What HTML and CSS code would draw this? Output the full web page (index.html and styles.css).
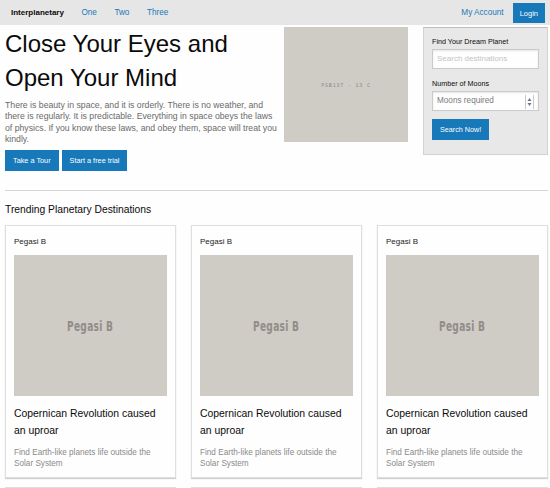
FILE: index.html
```html
<!DOCTYPE html>
<html lang="en">
<head>
<meta charset="utf-8">
<title>Interplanetary</title>
<link rel="stylesheet" href="styles.css">
</head>
<body>
<header class="topbar">
  <nav class="topbar-left">
    <span class="brand">Interplanetary</span>
    <a class="nav-link" href="#">One</a>
    <a class="nav-link" href="#">Two</a>
    <a class="nav-link" href="#">Three</a>
  </nav>
  <nav class="topbar-right">
    <a class="nav-link" href="#">My Account</a>
    <a class="btn btn-login" href="#">Login</a>
  </nav>
</header>
<main class="page">
  <section class="hero">
    <div class="hero-text">
      <h1 class="hero-title">Close Your Eyes and Open Your Mind</h1>
      <p class="hero-lead">There is beauty in space, and it is orderly. There is no weather, and there is regularly. It is predictable. Everything in space obeys the laws of physics. If you know these laws, and obey them, space will treat you kindly.</p>
      <div class="btn-row">
        <a class="btn" href="#">Take a Tour</a>
        <a class="btn" href="#">Start a free trial</a>
      </div>
    </div>
    <div class="hero-img"><span class="hero-img-text">PSB137 · 13 C</span></div>
    <form class="callout">
      <label class="field-label">Find Your Dream Planet</label>
      <input class="field" type="text" placeholder="Search destinations">
      <label class="field-label">Number of Moons</label>
      <div class="field field-number">
        <span class="field-value">Moons required</span>
        <svg class="spinner" width="9" height="14" viewBox="0 0 9 14">
          <line x1="0.5" y1="0" x2="0.5" y2="14" stroke="#c8c8c8" stroke-width="1"/>
          <line x1="8.5" y1="0" x2="8.5" y2="14" stroke="#c8c8c8" stroke-width="1"/>
          <path d="M2.5 6 L4.5 3 L6.5 6 Z" fill="#6a7690"/>
          <path d="M2.5 8 L4.5 11 L6.5 8 Z" fill="#6a7690"/>
        </svg>
      </div>
      <button class="btn btn-search" type="button">Search Now!</button>
    </form>
  </section>
  <hr class="divider">
  <h5 class="section-title">Trending Planetary Destinations</h5>
  <div class="cards">
    <article class="card">
      <div class="card-label">Pegasi B</div>
      <div class="card-img"><span>Pegasi B</span></div>
      <h4 class="card-title">Copernican Revolution caused an uproar</h4>
      <p class="card-text">Find Earth-like planets life outside the Solar System</p>
    </article>
    <article class="card">
      <div class="card-label">Pegasi B</div>
      <div class="card-img"><span>Pegasi B</span></div>
      <h4 class="card-title">Copernican Revolution caused an uproar</h4>
      <p class="card-text">Find Earth-like planets life outside the Solar System</p>
    </article>
    <article class="card">
      <div class="card-label">Pegasi B</div>
      <div class="card-img"><span>Pegasi B</span></div>
      <h4 class="card-title">Copernican Revolution caused an uproar</h4>
      <p class="card-text">Find Earth-like planets life outside the Solar System</p>
    </article>
    <article class="card">
      <div class="card-label">Pegasi B</div>
      <div class="card-img"><span>Pegasi B</span></div>
      <h4 class="card-title">Copernican Revolution caused an uproar</h4>
      <p class="card-text">Find Earth-like planets life outside the Solar System</p>
    </article>
    <article class="card">
      <div class="card-label">Pegasi B</div>
      <div class="card-img"><span>Pegasi B</span></div>
      <h4 class="card-title">Copernican Revolution caused an uproar</h4>
      <p class="card-text">Find Earth-like planets life outside the Solar System</p>
    </article>
    <article class="card">
      <div class="card-label">Pegasi B</div>
      <div class="card-img"><span>Pegasi B</span></div>
      <h4 class="card-title">Copernican Revolution caused an uproar</h4>
      <p class="card-text">Find Earth-like planets life outside the Solar System</p>
    </article>
  </div>
</main>
</body>
</html>
```
FILE: styles.css
```css
* { box-sizing: border-box; }
html, body { overflow: hidden; }
body {
  margin: 0;
  font-family: "Liberation Sans", Arial, sans-serif;
  color: #0a0a0a;
  background: #fefefe;
}
a { text-decoration: none; }

.topbar {
  height: 25px;
  background: #e6e6e6;
  display: flex;
  align-items: center;
  justify-content: space-between;
  padding: 0 5px 0 11px;
  font-size: 8px;
}
.topbar-left, .topbar-right {
  display: flex;
  align-items: center;
}
.topbar-left { column-gap: 17.5px; }
.topbar-right { column-gap: 9px; }
.brand { font-weight: bold; color: #0a0a0a; }
.nav-link { color: #1779ba; font-size: 8.2px; }

.btn {
  display: inline-flex;
  align-items: center;
  justify-content: center;
  background: #1779ba;
  color: #fefefe;
  font-family: inherit;
  font-size: 7.3px;
  height: 21px;
  padding: 0 8px;
  border: 0;
  border-radius: 0;
}
.btn-login { height: 20px; font-size: 7.5px; padding: 0 7px; margin-top: 1px; }

.page { padding: 0 2px 0 5px; }

.hero {
  display: flex;
  align-items: flex-start;
  margin-top: 2px;
}
.hero-text { width: 275px; margin-right: 4px; }
.hero-title {
  margin: 0;
  font-size: 24px;
  line-height: 34px;
  font-weight: normal;
  color: #0a0a0a;
}
.hero-lead {
  margin: 5px 0 5px;
  font-size: 8.7px;
  line-height: 11.3px;
  color: #6a6a6a;
}
.btn-row { display: flex; column-gap: 3px; }

.hero-img {
  width: 124px;
  height: 115px;
  background: #cfcbc5;
  display: flex;
  align-items: center;
  justify-content: center;
}
.hero-img-text {
  font-family: "DejaVu Sans Mono", monospace;
  font-size: 5px;
  letter-spacing: 0.8px;
  color: #8a8782;
}

.callout {
  margin: 0 0 0 15px;
  width: 125px;
  height: 128px;
  background: #e8e8e8;
  border: 1px solid #d2d2d2;
  border-top-color: #bdbdbd;
  padding: 9px 8px 0;
  display: flex;
  flex-direction: column;
  align-items: flex-start;
}
.field-label {
  display: block;
  font-size: 7.2px;
  line-height: 10px;
  color: #0a0a0a;
  margin-bottom: 2px;
}
.field {
  width: 100%;
  height: 19.5px;
  border: 1px solid #cacaca;
  background: #fefefe;
  box-shadow: inset 0 1px 2px rgba(10, 10, 10, 0.1);
  padding: 0 4px;
  font-family: inherit;
  font-size: 8px;
  margin: 0 0 10.5px;
  color: #0a0a0a;
}
.field::placeholder { color: #c4c4c4; }
.field-number {
  position: relative;
  display: flex;
  align-items: center;
  margin-bottom: 8.5px;
}
.field-value { color: #7a7a7a; font-size: 8.2px; }
.spinner { position: absolute; right: 4px; top: 2.5px; }
.btn-search { height: 20.5px; padding: 0 8px; font-size: 7.2px; }

.divider {
  border: 0;
  border-top: 1px solid #d6d6d6;
  margin: 19px 0 0;
}
.section-title {
  margin: 12px 0 8px;
  font-size: 10.3px;
  line-height: 14px;
  font-weight: normal;
  color: #0a0a0a;
}

.cards {
  display: grid;
  grid-template-columns: repeat(3, 171px);
  column-gap: 15px;
  row-gap: 9px;
}
.card {
  border: 1px solid #dedede;
  box-shadow: 0 1px 1px rgba(0, 0, 0, 0.18);
  background: #fefefe;
  padding: 9.5px 8px 8px;
}
.card-label {
  font-size: 8px;
  line-height: 12px;
  color: #222;
  margin-bottom: 7.5px;
}
.card-img {
  height: 141px;
  background: #cfcbc5;
  display: flex;
  align-items: center;
  justify-content: center;
}
.card-img span {
  font-family: "DejaVu Sans Condensed", "Liberation Sans Narrow", sans-serif;
  font-weight: bold;
  font-size: 14px;
  color: #918d88;
  letter-spacing: 0.4px;
  display: inline-block;
  transform: scaleX(0.72);
}
.card-title {
  margin: 10px 0 0;
  font-size: 10.4px;
  line-height: 16.5px;
  font-weight: normal;
  color: #0a0a0a;
}
.card-text {
  margin: 9px 0 0;
  font-size: 8.2px;
  line-height: 10.5px;
  color: #8a8a8a;
}
```
